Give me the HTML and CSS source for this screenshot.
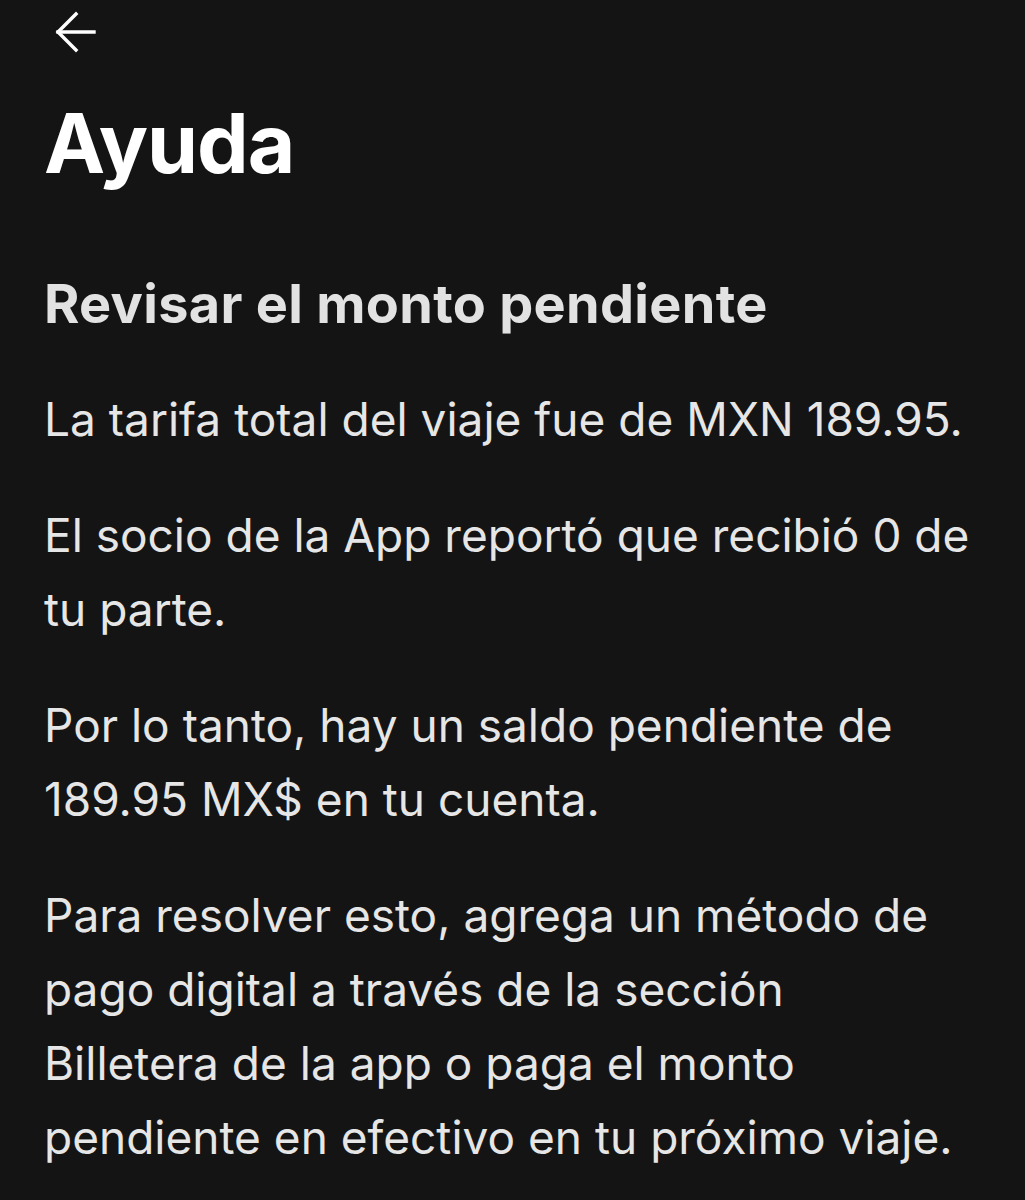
FILE: index.html
```html
<!DOCTYPE html>
<html lang="es">
<head>
<meta charset="utf-8">
<title>Ayuda</title>
<link rel="stylesheet" href="styles.css">
</head>
<body>
<main class="page">
  <header class="topbar">
    <button class="back" aria-label="Volver">
      <svg width="46" height="44" viewBox="0 0 46 44" fill="none" stroke="#ffffff" stroke-width="3.4" stroke-linecap="square">
        <path d="M6 22 H42"/>
        <path d="M24 4 L6 22 L24 40"/>
      </svg>
    </button>
  </header>
  <h1 class="title">Ayuda</h1>
  <h2 class="subtitle">Revisar el monto pendiente</h2>
  <div class="content">
    <p>La tarifa total del viaje fue de MXN 189.95.</p>
    <p>El socio de la App reportó que recibió 0 de tu parte.</p>
    <p>Por lo tanto, hay un saldo pendiente de 189.95 MX$ en tu cuenta.</p>
    <p>Para resolver esto, agrega un método de pago digital a través de la sección<br>Billetera de la app o paga el monto pendiente en efectivo en tu próximo viaje.</p>
  </div>
</main>
</body>
</html>
```

FILE: styles.css
```css
html, body {
  margin: 0;
  padding: 0;
  background: #141414;
}
.page {
  padding: 0 20px 0 44px;
  color: #e8e8e8;
  font-family: Inter, "Liberation Sans", sans-serif;
}
.topbar {
  height: 64px;
  display: flex;
  align-items: flex-start;
}
.back {
  background: none;
  border: 0;
  padding: 0;
  margin: 10px 0 0 8px;
  display: block;
}
.back svg { display: block; }
.title {
  margin: 30px 0 0 0;
  font-size: 82px;
  line-height: 100px;
  font-weight: 700;
  letter-spacing: -1px;
  color: #ffffff;
}
.subtitle {
  margin: 78px 0 0 0;
  font-size: 54px;
  line-height: 64px;
  font-weight: 700;
  letter-spacing: 0.3px;
  color: #e2e2e2;
}
.content {
  margin-top: 46px;
}
.content p {
  margin: 0 0 42px 0;
  font-size: 46px;
  line-height: 74px;
  font-weight: 400;
  letter-spacing: 0;
  color: #e6e6e6;
}
```
